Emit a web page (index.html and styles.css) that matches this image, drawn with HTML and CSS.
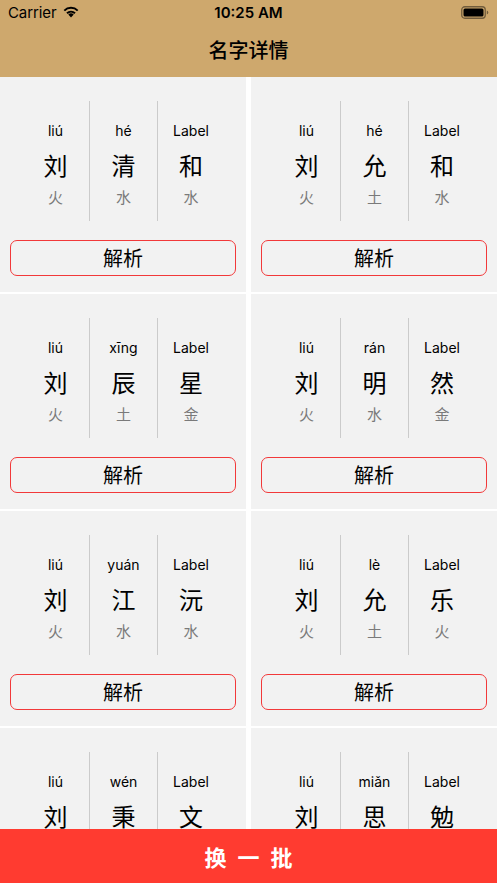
FILE: index.html
```html
<!DOCTYPE html>
<html lang="zh">
<head>
<meta charset="utf-8">
<title>名字详情</title>
<link rel="stylesheet" href="styles.css">
</head>
<body>
<div class="app">
  <header class="header">
    <div class="status">
      <div class="status-left">
        <span class="carrier">Carrier</span>
        <svg class="wifi" width="18" height="13" viewBox="0 0 18 13">
          <path d="M9 12.5 L6.3 9.6 A3.9 3.9 0 0 1 11.7 9.6 Z" fill="#000"/>
          <path d="M4.3 7.6 A6.7 6.7 0 0 1 13.7 7.6 L12.3 9 A4.8 4.8 0 0 0 5.7 9 Z" fill="#000"/>
          <path d="M1.6 4.9 A10.5 10.5 0 0 1 16.4 4.9 L15 6.3 A8.5 8.5 0 0 0 3 6.3 Z" fill="#000"/>
        </svg>
      </div>
      <span class="time">10:25 AM</span>
      <div class="status-right">
        <svg class="battery" width="28" height="13" viewBox="0 0 28 13">
          <rect x="0.75" y="0.75" width="23.5" height="11.5" rx="3" fill="none" stroke="#000" stroke-opacity="0.45" stroke-width="1.3"/>
          <rect x="2.5" y="2.5" width="20" height="8" rx="1.5" fill="#000"/>
          <path d="M25.8 4.5 Q27.3 5 27.3 6.5 Q27.3 8 25.8 8.5 Z" fill="#000" fill-opacity="0.45"/>
        </svg>
      </div>
    </div>
    <h1 class="title">名字详情</h1>
  </header>

  <main class="list">
    <section class="card">
      <div class="chars">
        <div class="col"><span class="py">liú</span><span class="hz">刘</span><span class="el">火</span></div>
        <div class="col"><span class="py">hé</span><span class="hz">清</span><span class="el">水</span></div>
        <div class="col"><span class="py">Label</span><span class="hz">和</span><span class="el">水</span></div>
      </div>
      <button class="parse">解析</button>
    </section>
    <section class="card">
      <div class="chars">
        <div class="col"><span class="py">liú</span><span class="hz">刘</span><span class="el">火</span></div>
        <div class="col"><span class="py">hé</span><span class="hz">允</span><span class="el">土</span></div>
        <div class="col"><span class="py">Label</span><span class="hz">和</span><span class="el">水</span></div>
      </div>
      <button class="parse">解析</button>
    </section>
    <section class="card">
      <div class="chars">
        <div class="col"><span class="py">liú</span><span class="hz">刘</span><span class="el">火</span></div>
        <div class="col"><span class="py">xīng</span><span class="hz">辰</span><span class="el">土</span></div>
        <div class="col"><span class="py">Label</span><span class="hz">星</span><span class="el">金</span></div>
      </div>
      <button class="parse">解析</button>
    </section>
    <section class="card">
      <div class="chars">
        <div class="col"><span class="py">liú</span><span class="hz">刘</span><span class="el">火</span></div>
        <div class="col"><span class="py">rán</span><span class="hz">明</span><span class="el">水</span></div>
        <div class="col"><span class="py">Label</span><span class="hz">然</span><span class="el">金</span></div>
      </div>
      <button class="parse">解析</button>
    </section>
    <section class="card">
      <div class="chars">
        <div class="col"><span class="py">liú</span><span class="hz">刘</span><span class="el">火</span></div>
        <div class="col"><span class="py">yuán</span><span class="hz">江</span><span class="el">水</span></div>
        <div class="col"><span class="py">Label</span><span class="hz">沅</span><span class="el">水</span></div>
      </div>
      <button class="parse">解析</button>
    </section>
    <section class="card">
      <div class="chars">
        <div class="col"><span class="py">liú</span><span class="hz">刘</span><span class="el">火</span></div>
        <div class="col"><span class="py">lè</span><span class="hz">允</span><span class="el">土</span></div>
        <div class="col"><span class="py">Label</span><span class="hz">乐</span><span class="el">火</span></div>
      </div>
      <button class="parse">解析</button>
    </section>
    <section class="card">
      <div class="chars">
        <div class="col"><span class="py">liú</span><span class="hz">刘</span><span class="el">火</span></div>
        <div class="col"><span class="py">wén</span><span class="hz">秉</span><span class="el">金</span></div>
        <div class="col"><span class="py">Label</span><span class="hz">文</span><span class="el">水</span></div>
      </div>
      <button class="parse">解析</button>
    </section>
    <section class="card">
      <div class="chars">
        <div class="col"><span class="py">liú</span><span class="hz">刘</span><span class="el">火</span></div>
        <div class="col"><span class="py">miǎn</span><span class="hz">思</span><span class="el">金</span></div>
        <div class="col"><span class="py">Label</span><span class="hz">勉</span><span class="el">水</span></div>
      </div>
      <button class="parse">解析</button>
    </section>
  </main>

  <button class="refresh">换 一 批</button>
</div>
</body>
</html>
```

FILE: styles.css
```css
* { box-sizing: border-box; }
html, body { margin: 0; padding: 0; }
body {
  width: 497px;
  height: 883px;
  overflow: hidden;
  background: #fff;
  font-family: Inter, "Noto Sans", "Noto Sans CJK SC", sans-serif;
  color: #000;
}
.app {
  display: flex;
  flex-direction: column;
  height: 883px;
}
.header {
  flex: 0 0 77px;
  background: #cea86d;
  display: flex;
  flex-direction: column;
}
.status {
  height: 25px;
  display: flex;
  align-items: center;
  justify-content: space-between;
  padding: 0 8px;
}
.status-left {
  display: flex;
  align-items: center;
  gap: 6px;
  width: 120px;
}
.carrier {
  font-size: 15px;
  letter-spacing: -0.1px;
  line-height: 25px;
}
.wifi { margin-top: -2px; }
.time {
  font-size: 15px;
  font-weight: 600;
  line-height: 25px;
}
.status-right {
  width: 120px;
  display: flex;
  justify-content: flex-end;
}
.title {
  margin: 0;
  flex: 1;
  display: flex;
  align-items: center;
  justify-content: center;
  font-family: "Noto Sans CJK SC", sans-serif;
  font-size: 20px;
  font-weight: 500;
  padding-bottom: 3px;
}
.list {
  flex: 1;
  overflow: hidden;
  display: grid;
  grid-template-columns: 246px 246px;
  grid-auto-rows: 215px;
  column-gap: 5px;
  row-gap: 2px;
  align-content: start;
  background: #fff;
}
.card {
  background: #f2f2f2;
  display: flex;
  flex-direction: column;
  padding-top: 24px;
}
.chars {
  display: grid;
  grid-template-columns: 67px 68px 67px;
  justify-content: center;
  height: 120px;
}
.col {
  display: flex;
  flex-direction: column;
  align-items: center;
  padding-top: 21px;
}
.col + .col { border-left: 1px solid #cbcbcb; }
.py {
  font-size: 14px;
  line-height: 18px;
  height: 18px;
}
.hz {
  font-family: "Noto Sans CJK SC", sans-serif;
  font-size: 24px;
  line-height: 32px;
  margin-top: 9px;
}
.el {
  font-family: "Noto Sans CJK SC", sans-serif;
  font-size: 15px;
  line-height: 20px;
  margin-top: 6px;
  color: #7a7a7a;
}
.parse {
  margin: 19px 10px 0 10px;
  height: 36px;
  background: transparent;
  border: 1.5px solid #f2393a;
  border-radius: 7px;
  font-family: "Noto Sans CJK SC", sans-serif;
  font-size: 20px;
  color: #000;
  padding: 0;
  line-height: 32px;
}
.refresh {
  flex: 0 0 54px;
  border: none;
  margin: 0;
  background: #ff3b30;
  color: #fff;
  font-family: "Noto Sans CJK SC", sans-serif;
  font-size: 22px;
  font-weight: 700;
  word-spacing: 6px;
  padding: 0;
}
```
